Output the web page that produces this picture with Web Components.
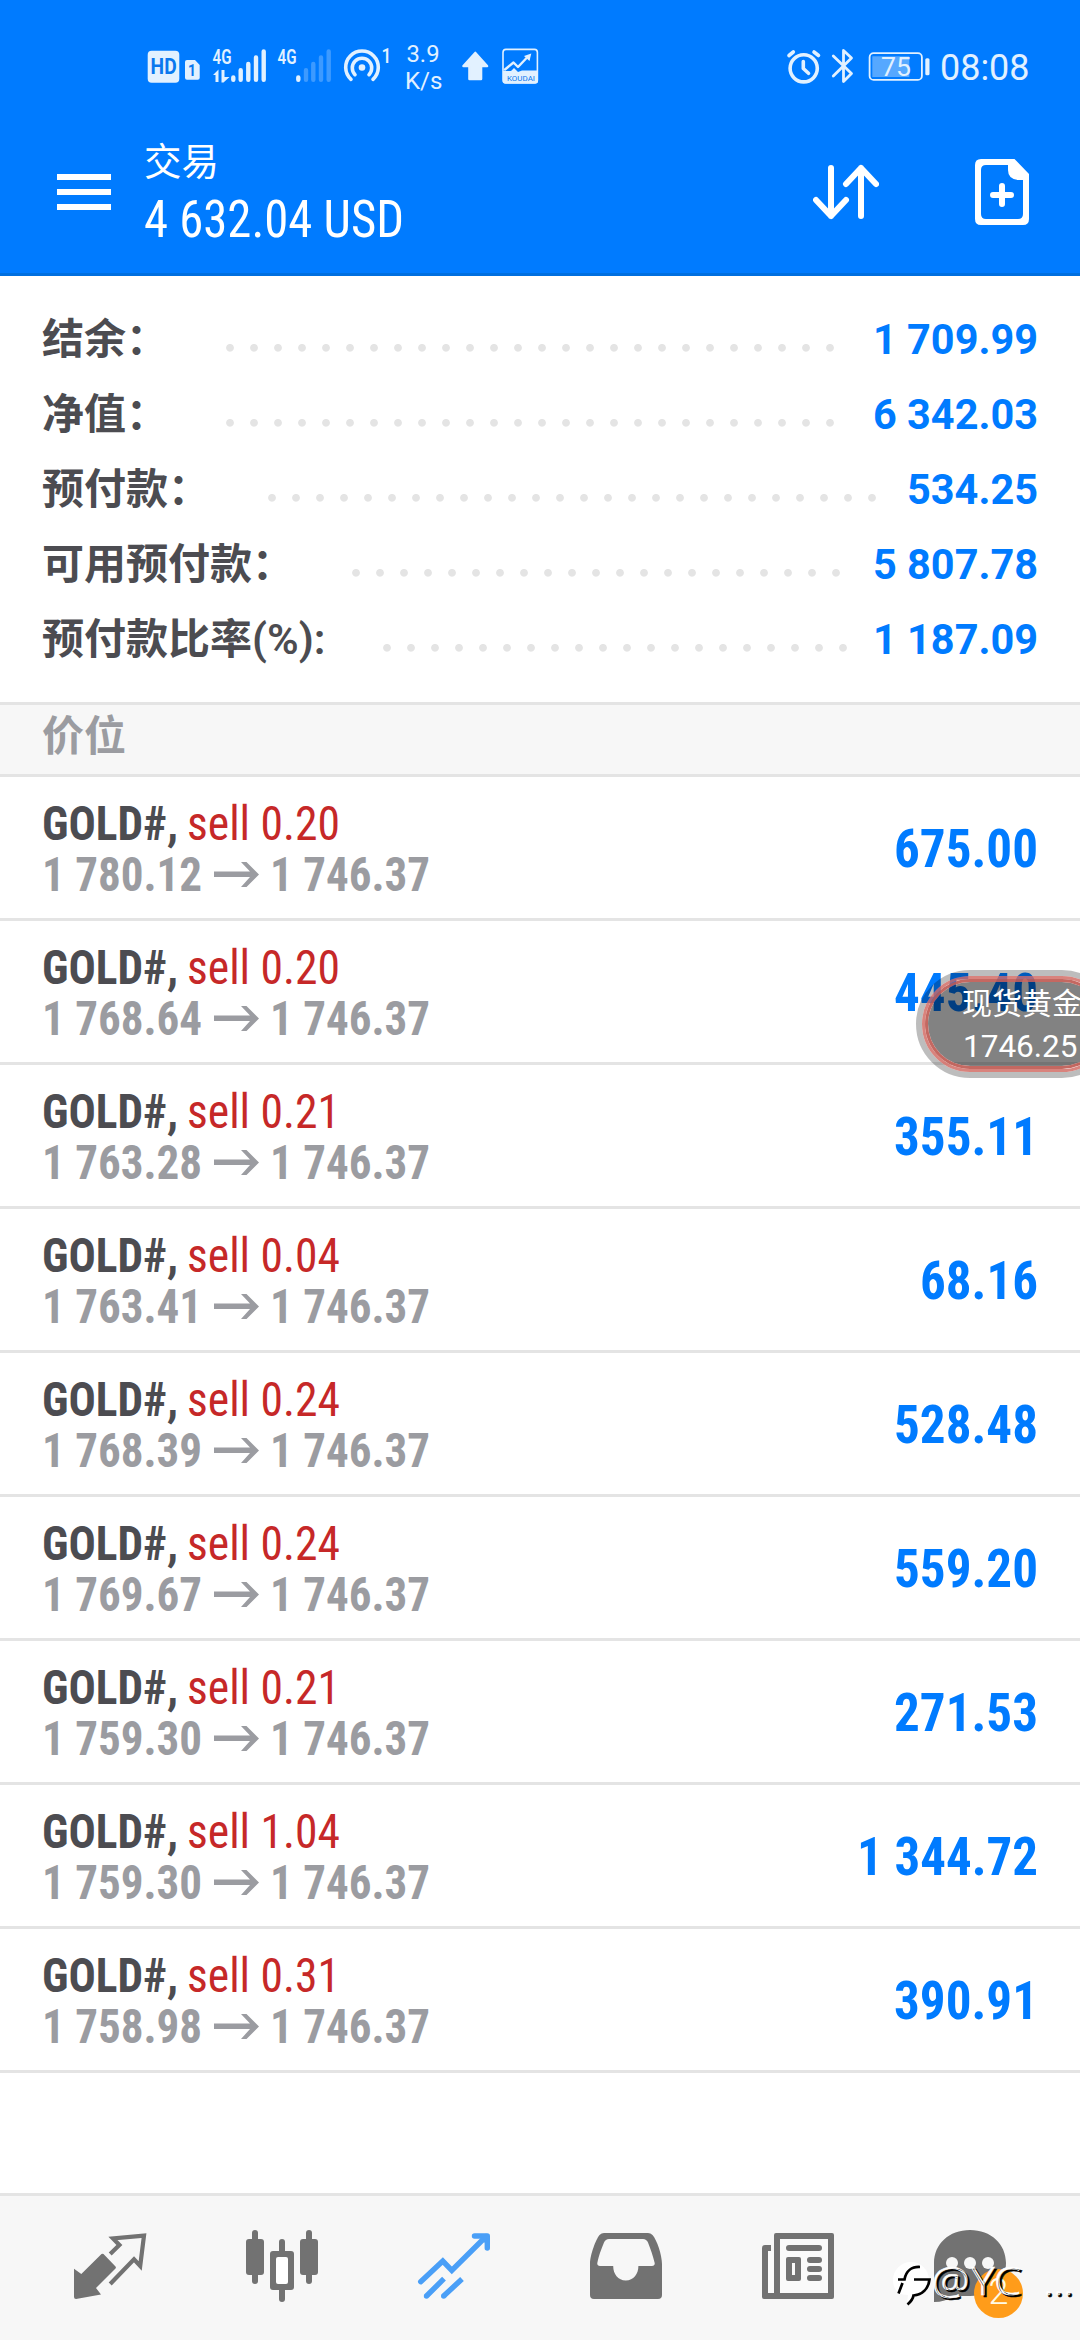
<!DOCTYPE html>
<html lang="zh-CN">
<head>
<meta charset="utf-8">
<title>交易</title>
<style>
html,body{margin:0;padding:0}
body{width:1080px;height:2340px;overflow:hidden;background:#fff;font-family:Roboto,"Noto Sans CJK SC",sans-serif}
</style>
</head>
<body>
<trade-app></trade-app>
<script>
const define = (name, html, after) => customElements.define(name, class extends HTMLElement {
  connectedCallback() {
    if (this.shadowRoot) return;
    const root = this.attachShadow({ mode: 'open' });
    root.innerHTML = typeof html === 'function' ? html(this) : html;
    if (after) after(this, root);
  }
});

// Single-line text squeezed horizontally to the width in its "w" attribute.
define('fit-text', `<style>
:host{display:block;white-space:pre;flex:none}
span{display:inline-block;transform-origin:0 50%;font-stretch:var(--stretch,75%)}
</style><span><slot></slot></span>`, (el, root) => {
  const w = parseFloat(el.getAttribute('w'));
  const s = root.querySelector('span');
  el.style.width = w + 'px';
  s.style.transform = `scaleX(${w / s.getBoundingClientRect().width})`;
});

define('status-bar', `<style>
:host{display:flex;justify-content:space-between;height:108px;padding:0 46px 0 140px}
svg{display:block;height:108px;font-family:Roboto,sans-serif;fill:#e2f1ff}
.l{fill:none;stroke:#e2f1ff;stroke-linecap:round;stroke-linejoin:round}
.b{fill:#0a78ee}
</style>
<svg width="410" viewBox="140 0 410 108">
<rect x="147.7" y="50.7" width="31.6" height="32" rx="4"/>
<text class="b" x="150.6" y="74.3" font-size="21.5" font-weight="700" textLength="26" lengthAdjust="spacingAndGlyphs">HD</text>
<path d="M187 60H195L199.7 65V77.7Q199.7 79.7 197.7 79.7H187Q185 79.7 185 77.7V62Q185 60 187 60Z"/>
<text class="b" x="188" y="76" font-size="17" font-weight="700" textLength="8" lengthAdjust="spacingAndGlyphs">1</text>
<text x="212.5" y="63.5" font-size="20" font-weight="600" textLength="19" lengthAdjust="spacingAndGlyphs">4G</text>
<path d="M213 75L218.5 69.5V82H215.5V75ZM221.500 70H224.5V77H229.500L223.500 82.500H221.500Z"/>
<g class="l" stroke-width="4.4"><path d="M233.300 77.5V79.700M240.700 70.200V79.700M248.300 64V79.700M256 57.500V79.700M263.700 51.400V79.700M298.300 77.500V79.700"/>
<path opacity=".27" d="M306 70.200V79.700M313.300 64V79.700M321 57.500V79.700M328.700 51.400V79.700"/></g>
<text x="277.500" y="63.500" font-size="20" font-weight="600" textLength="19" lengthAdjust="spacingAndGlyphs">4G</text>
<g class="l" stroke-width="3.600"><path d="M351 79.300A16.300 16.300 0 1 1 373 79.300"/><path d="M355 74.700A9.700 9.700 0 1 1 369 74.700"/></g><circle cx="362" cy="67.500" r="3.300"/>
<text x="381.500" y="62.700" font-size="19.500" font-weight="500" textLength="10" lengthAdjust="spacingAndGlyphs">1</text>
<text x="406.500" y="61.500" font-size="24.500" textLength="33" lengthAdjust="spacingAndGlyphs">3.9</text>
<text x="405" y="89.300" font-size="24.500" textLength="37.500" lengthAdjust="spacingAndGlyphs">K/s</text>
<path d="M475.300 53L487 66H481V79H469.500V66H463.500Z" stroke="#e2f1ff" stroke-width="2.600" stroke-linejoin="round"/>
<rect class="l" x="503" y="49.400" width="34.400" height="33.600" rx="3" stroke-width="1.600"/>
<path d="M503 71H511L514 68L518 72L522 70.500H538V81Q538 83.500 535.500 83.500H505Q503 83.500 503 81Z"/>
<path class="l" stroke-width="2.400" stroke-linejoin="miter" d="M505 69.500L513.500 62.500L518 67L528 56.500"/><path d="M524 56L531.300 53.500L529.500 61Z"/>
<text class="b" x="507" y="80.700" font-size="7.500" textLength="28" lengthAdjust="spacingAndGlyphs">KOUDAI</text>
</svg>
<svg width="254" viewBox="780 0 254 108">
<g class="l" stroke-width="3.600"><circle cx="803.700" cy="68.300" r="13.600"/><path d="M803.300 61.500V68.500L808.500 73.300M789 55.500L793.300 52M814 52L818.500 55.500"/></g>
<path class="l" stroke-width="2.800" d="M833.300 56L851.500 73.500L843.500 81.500V50.500L851.500 58L833.300 76"/>
<rect class="l" x="869.600" y="53.200" width="52.300" height="26.700" rx="4" stroke-width="1.800"/>
<rect x="872.300" y="56.300" width="37" height="20.700" opacity=".38"/><rect x="925.300" y="58.300" width="4.200" height="17" rx="1.500"/>
<text x="881" y="75.700" font-size="26" textLength="30" lengthAdjust="spacingAndGlyphs">75</text>
<text x="940" y="80" font-size="36" textLength="89.500" lengthAdjust="spacingAndGlyphs">08:08</text>
</svg>`);

define('app-header', `<style>
:host{display:block;height:276px;box-sizing:border-box;background:#007bff;border-bottom:3px solid #006fdf;color:#fff}
.bar{display:flex;height:165px;padding:0 51px 0 57px;align-items:flex-start}
.menu{display:flex;flex-direction:column;gap:9px;margin:66px 33px 0 0}
.menu i{display:block;width:54px;height:6px;background:#fff}
.t{display:flex;flex-direction:column;gap:4px;margin-top:30px;flex:1}
.a{font-size:37.500px;line-height:48px}.b{font-size:52px;line-height:60px;font-weight:450}
svg{display:block;margin-top:51px}
</style>
<status-bar></status-bar>
<div class="bar"><div class="menu"><i></i><i></i><i></i></div>
<div class="t"><div class="a">交易</div><fit-text class="b" w="260">4 632.04 USD</fit-text></div>
<svg width="66" height="66" viewBox="813 159 66 66" fill="none" stroke="#fff" stroke-width="6" stroke-linecap="round" stroke-linejoin="round"><path d="M831 168V216M816 200L831 216L846 200M861 216V168M846 184L861 168L876 184"/></svg>
<svg style="margin-left:96px" width="54" height="66" viewBox="975 159 54 66"><path fill="#fff" fill-rule="evenodd" d="M981 159H1014.500L1029 174V219Q1029 225 1023 225H981Q975 225 975 219V165Q975 159 981 159ZM986 165Q981 165 981 170V214Q981 219 986 219H1018Q1023 219 1023 214V180H1018Q1008 179 1008 170V165Z"/><path d="M1002 186V204M993 195H1011" stroke="#fff" stroke-width="6" stroke-linecap="round"/></svg>
</div>`);

define('balance-row', el => {
  const value = el.getAttribute('value'), unit = el.getAttribute('unit');
  return `<style>
:host{display:flex;height:75px;line-height:75px;font-size:42px;font-weight:700;color:#4c4c51}
.dots{height:75px;margin-left:50px;background:radial-gradient(circle at 12px 45.800px,#e4e4e4 3.400px,transparent 4.300px) 0 0/24px 75px repeat-x}
.v{margin-left:auto;color:#007bff}
fit-text{--stretch:100%}
.m{font-weight:600}
</style><slot></slot>${unit ? `<fit-text class="m" w="73.400">${unit}</fit-text>` : ''}<div class="dots" style="width:${el.getAttribute('dots') * 24}px"></div><fit-text class="v" w="${value.length > 6 ? 165 : 131}">${value}</fit-text>`;
});

define('balance-panel', `<style>:host{display:block;padding:26px 42px 25px}</style>
<balance-row dots="26" value="1 709.99">结余：</balance-row>
<balance-row dots="26" value="6 342.03">净值：</balance-row>
<balance-row dots="26" value="534.25">预付款：</balance-row>
<balance-row dots="21" value="5 807.78">可用预付款：</balance-row>
<balance-row dots="20" unit="(%):" value="1 187.09">预付款比率</balance-row>`);

define('section-title', `<style>:host{display:block;box-sizing:border-box;height:75px;border-top:3px solid #e4e4e4;border-bottom:3px solid #e4e4e4;background:#f7f7f7;color:#9b9ca1;font-size:42px;font-weight:700;line-height:63px;padding-left:42px}</style><slot></slot>`);

define('position-row', el => {
  const profit = el.getAttribute('profit');
  const w = { 5: 118, 6: 144, 8: 181 }[profit.length];
  return `<style>
:host{display:flex;justify-content:space-between;box-sizing:border-box;height:144px;border-bottom:3px solid #e4e4e4;padding:21px 42px 0;font-size:48px;line-height:51px;font-weight:700}
.l{display:flex}.n{color:#4c4c51;margin-right:9px}.s{color:#c62828;font-weight:450}
.p{color:#9b9ca1}svg{display:block;margin:13px 11px 0 12px}
.v{font-size:54px;line-height:54px;color:#007bff;margin-top:24px}
</style>
<div><div class="l"><fit-text class="n" w="136">GOLD#,</fit-text><fit-text class="s" w="153">sell ${el.getAttribute('lot')}</fit-text></div>
<div class="l p"><fit-text w="160">${el.getAttribute('open')}</fit-text><svg width="45" height="25" fill="#9b9ca1"><path d="M0 9.500H36L27 0H32.500L45 12.500L32.500 25H27L36 15H0Z"/></svg><fit-text w="160">1 746.37</fit-text></div></div>
<fit-text class="v" w="${w}">${profit}</fit-text>`;
});

define('position-list', `<style>:host{display:block}</style>` + [
  ['0.20', '1 780.12', '675.00'], ['0.20', '1 768.64', '445.40'], ['0.21', '1 763.28', '355.11'],
  ['0.04', '1 763.41', '68.16'], ['0.24', '1 768.39', '528.48'], ['0.24', '1 769.67', '559.20'],
  ['0.21', '1 759.30', '271.53'], ['1.04', '1 759.30', '1 344.72'], ['0.31', '1 758.98', '390.91']
].map(([a, b, c]) => `<position-row lot="${a}" open="${b}" profit="${c}"></position-row>`).join(''));

define('price-float', `<style>
:host{position:absolute;left:916px;top:970px;width:200px;height:108px;box-sizing:border-box;border-radius:54px;border:6px solid rgba(0,0,0,.26);background-clip:padding-box;color:#fff}
.r{box-sizing:border-box;height:96px;border-radius:48px;border:3px solid rgba(208,100,92,.8)}
.q{box-sizing:border-box;height:90px;border-radius:45px;border:3px solid rgba(190,88,80,.9);background:rgba(0,0,0,.49);background-clip:padding-box;padding:2px 0 0 34px;white-space:nowrap}
.a{font-size:30px;line-height:40px}.b{font-size:31.500px;line-height:42px;padding-left:1px;margin-top:2px}
</style><div class="r"><div class="q"><div class="a">现货黄金</div><div class="b">1746.25</div></div></div>`);

define('tab-bar', `<style>
:host{display:flex;box-sizing:border-box;height:147px;border-top:3px solid #e4e4e4;background:#f7f7f7;padding:34px 24px 0}
div{width:172px;display:flex;justify-content:center}
svg{display:block;overflow:visible;fill:#727272}
</style>
<div><svg width="72" height="72"><path d="M36.200 24L45.400 15L39 8.500L70 5.600L66.200 36L60 29.300L36.200 54" fill="none" stroke="#727272" stroke-width="4.200"/><path d="M0 38.700L7.300 44L27.500 24Q28.500 23.300 29.500 24L41.500 36.500Q42.300 37.500 41.500 38.500L22 58L27 64.500L2 69Q0 69 0 67Z"/></svg></div>
<div><svg width="72" height="72"><rect x="0" y="9" width="18" height="36" rx="3"/><rect x="6" y="0" width="6" height="54" rx="3"/><rect x="54" y="9" width="18" height="36" rx="3"/><rect x="60" y="0" width="6" height="54" rx="3"/><rect x="33" y="9" width="6" height="63" rx="3"/><rect x="24" y="21" width="24" height="39" rx="3"/><rect x="30" y="27" width="12" height="27" rx="2" fill="#fff"/></svg></div>
<div><svg width="72" height="72" fill="none" stroke="#4a9ff7" stroke-width="5.400" style="fill:none"><path stroke-linecap="round" d="M2.700 51.700L24.800 31L33.800 40.300L68 6.500"/><path stroke-linecap="round" stroke-linejoin="round" d="M56.500 6H69.300V18"/><path d="M60 6H69V15Z" fill="#4a9ff7" stroke="none"/><path d="M26 48.700L9 65.500M44 49L26.200 65.500"/><circle cx="8.500" cy="66" r="2.700" fill="#4a9ff7" stroke="none"/><circle cx="25.700" cy="66" r="2.700" fill="#4a9ff7" stroke="none"/></svg></div>
<div><svg width="72" height="72"><path fill-rule="evenodd" d="M0 34C0 25 6 9 9.500 5Q11.500 3 14 3H58Q60.500 3 62.500 5C67 10 72 25 72 34V65Q72 69 68 69H4Q0 69 0 65ZM19 9Q15.500 9 14 12.500C11 20 9 25 7.300 33Q7 36 10 36H23.200C23.200 44 28 50.500 35.800 50.500S48.400 44 48.400 36H62Q65 36 64.700 33C63 26 61 20 58 12.500Q56.500 9 53 9Z"/></svg></div>
<div><svg width="72" height="72"><path fill="#fafafa" d="M6 21H12V63H6ZM18 9H66V63H18Z"/><path fill-rule="evenodd" d="M14 3H70Q72 3 72 5V67Q72 69 70 69H2Q0 69 0 67V18Q0 15 3 15H9V21H6V63H12V5Q12 3 14 3ZM18 9V63H66V9ZM26 27H37Q39 27 39 29V49Q39 51 37 51H26Q24 51 24 49V29Q24 27 26 27ZM30 33V45H33V33Z"/><path d="M27 18H57M48 30H57M48 39H57M48 48H57" stroke="#727272" stroke-width="6" stroke-linecap="round"/></svg></div>
<div><svg width="72" height="72"><path d="M36 0C57 0 72 14 72 33S57 66 36 66H20Q11 72 0 72V33C0 14 15 0 36 0Z"/><g fill="#f7f7f7"><circle cx="18" cy="33" r="6"/><circle cx="36" cy="33" r="6"/><circle cx="54" cy="33" r="6"/></g></svg></div>`);

define('count-badge', `<style>:host{position:absolute;left:974px;top:2269px;width:49px;height:49px;border-radius:50%;background:#ff9c1a;color:#fffbe8;font-size:36px;font-weight:300;line-height:47px;text-align:center}</style><slot></slot>`);

define('author-mark', `<style>
:host{position:absolute;left:890px;top:2255px;width:190px;height:60px;display:block}
svg{display:block;font-family:"Noto Sans","Open Sans",sans-serif;font-weight:300}
text{fill:#fff;text-shadow:2px 1.500px 0 #000;stroke:#fff;stroke-width:.5px}
</style><svg width="190" height="60" viewBox="890 2255 190 60">
<path d="M893 2280A18 18 0 0 1 929 2280C928 2290 922 2294 913 2295C912 2299 910 2301 907 2303L908 2295C898 2295 893 2289 893 2280Z" fill="#fff"/>
<path d="M898.500 2293.500L902.500 2283M898 2279.500H904.500C906 2271 912 2266.500 920 2267M914 2279.500H929.500C928.500 2289 922 2294.500 913.500 2295.500C913 2299 911 2301.500 907.500 2304.500" fill="none" stroke="#000" stroke-width="2.700"/>
<text x="931.500" y="2295" font-size="39" textLength="38" lengthAdjust="spacingAndGlyphs">@</text>
<text x="971" y="2295" font-size="39" textLength="50" lengthAdjust="spacingAndGlyphs">YC</text>
<text x="1043" y="2295" font-size="39" textLength="30" lengthAdjust="spacingAndGlyphs">...</text>
</svg>`);

define('trade-app', `<style>:host{display:flex;flex-direction:column;position:relative;width:1080px;height:2340px;overflow:hidden}tab-bar{margin-top:auto}</style>
<app-header></app-header><balance-panel></balance-panel><section-title>价位</section-title><position-list></position-list><tab-bar></tab-bar>
<price-float></price-float><count-badge>2</count-badge><author-mark></author-mark>`);
</script>
</body>
</html>
